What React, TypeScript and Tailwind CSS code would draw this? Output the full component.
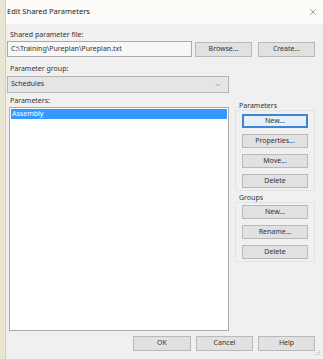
import { ChevronDown, X } from 'lucide-react';

const Btn = ({ label, focused = false, className = '' }: { label: string; focused?: boolean; className?: string }) => (
  <button
    type="button"
    className={`flex items-center justify-center text-[7px] text-[#333] border ${
      focused ? 'border-[#3c86d4] bg-[#e5f0fa] ring-1 ring-inset ring-[#3c86d4]' : 'border-[#b9b9b9] bg-[#e1e1e1]'
    } ${className}`}
  >
    {label}
  </button>
);

export default function App() {
  return (
    <div
      className="flex w-[323px] h-[359px] bg-[#f0f0f0] text-[#333] overflow-hidden"
      style={{ fontFamily: '"Noto Sans", "Open Sans", sans-serif' }}
    >
      {/* window frame edge */}
      <div className="w-[6px] bg-[#e9e5d3] border-r border-[#d3cfc0]" />

      <div className="flex flex-col flex-1 relative">
        {/* title bar */}
        <div className="h-[24px] bg-[#fdfcf8] flex items-center justify-between pl-[1px] pr-[5px]">
          <span className="text-[7.5px] text-[#222]">Edit Shared Parameters</span>
          <X size={10} strokeWidth={1.2} className="text-[#444]" />
        </div>

        <div className="flex flex-col pl-[1px]">
          <div className="mt-[4px] pl-[3px] text-[7px] leading-[13px]">Shared parameter file:</div>
          <div className="flex items-center">
            <div className="w-[185px] h-[16px] bg-[#f7f7f7] border border-[#a9a9a9] flex items-center px-[3px] text-[7px]">
              C:\Training\Pureplan\Pureplan.txt
            </div>
            <Btn label="Browse..." className="ml-[3px] w-[57px] h-[15px]" />
            <Btn label="Create..." className="ml-[6px] w-[57px] h-[15px]" />
          </div>

          <div className="mt-[5px] pl-[3px] text-[7px] leading-[13px]">Parameter group:</div>
          <div className="w-[222px] h-[17px] mt-[1px] bg-[#e5e5e5] border border-[#b4b4b4] flex items-center justify-between px-[3px] text-[7px]">
            <span>Schedules</span>
            <ChevronDown size={8} strokeWidth={1.5} className="text-[#777] mr-[3px]" />
          </div>

          <div className="flex mt-[1px]">
            <div className="flex flex-col">
              <div className="pl-[3px] text-[7px] leading-[13px]">Parameters:</div>
              <div className="ml-[2px] w-[220px] h-[224px] bg-white border border-[#a9a9a9] p-[1px]">
                <div className="h-[10px] bg-[#3399ff] text-white text-[7px] leading-[10px] pl-[1px]">Assembly</div>
              </div>
            </div>

            <div className="flex flex-col ml-[6px] mt-[8px] w-[80px]">
              <div className="text-[7px] leading-[8px] pl-[4px]">Parameters</div>
              <div className="border border-[#e2e2e2] flex flex-col items-center gap-[6px] pt-[3px] pb-[2px]">
                <Btn label="New..." focused className="w-[66px] h-[14px]" />
                <Btn label="Properties..." className="w-[66px] h-[14px]" />
                <Btn label="Move..." className="w-[66px] h-[14px]" />
                <Btn label="Delete" className="w-[66px] h-[14px]" />
              </div>
              <div className="text-[7px] leading-[8px] pl-[4px] mt-[3px]">Groups</div>
              <div className="border border-[#e2e2e2] flex flex-col items-center gap-[6px] pt-[2px] pb-[2px]">
                <Btn label="New..." className="w-[66px] h-[14px]" />
                <Btn label="Rename..." className="w-[66px] h-[14px]" />
                <Btn label="Delete" className="w-[66px] h-[14px]" />
              </div>
            </div>
          </div>

          <div className="flex justify-end gap-[5px] mt-[5px] pr-[8px]">
            <Btn label="OK" className="w-[58px] h-[15px]" />
            <Btn label="Cancel" className="w-[57px] h-[15px]" />
            <Btn label="Help" className="w-[57px] h-[15px]" />
          </div>
        </div>

        {/* size grip */}
        <svg width="6" height="6" viewBox="0 0 6 6" className="absolute right-[2px] bottom-[3px]">
          <rect x="4" y="0" width="1" height="1" fill="#bbb" />
          <rect x="2" y="2" width="1" height="1" fill="#bbb" />
          <rect x="4" y="2" width="1" height="1" fill="#bbb" />
          <rect x="0" y="4" width="1" height="1" fill="#bbb" />
          <rect x="2" y="4" width="1" height="1" fill="#bbb" />
          <rect x="4" y="4" width="1" height="1" fill="#bbb" />
        </svg>
      </div>
    </div>
  );
}
